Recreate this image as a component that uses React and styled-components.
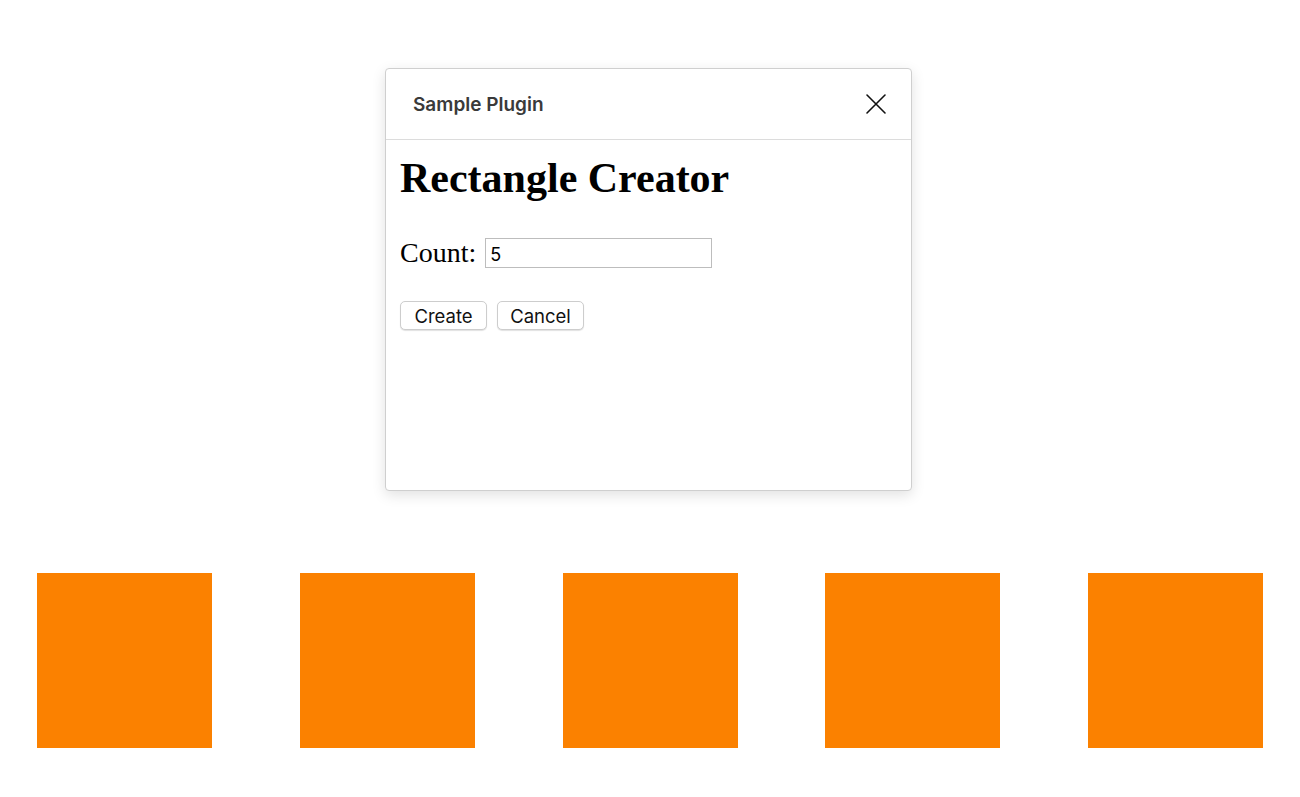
import styled, { createGlobalStyle } from 'styled-components';

const GlobalStyle = createGlobalStyle`
  html, body {
    margin: 0;
    padding: 0;
    background: #ffffff;
  }
  body {
    font-family: "Liberation Serif", "Times New Roman", serif;
  }
`;

const Page = styled.div`
  width: 1300px;
  height: 797px;
  display: flex;
  flex-direction: column;
  align-items: center;
  padding-top: 68px;
  box-sizing: border-box;
`;

const Dialog = styled.div`
  width: 527px;
  height: 423px;
  margin-left: -3px;
  box-sizing: border-box;
  background: #fff;
  border: 1px solid #cfcfcf;
  border-radius: 4px;
  box-shadow: 0 4px 14px rgba(0, 0, 0, 0.12);
  display: flex;
  flex-direction: column;
`;

const Header = styled.div`
  height: 71px;
  box-sizing: border-box;
  border-bottom: 1px solid #dcdcdc;
  display: flex;
  align-items: center;
  justify-content: space-between;
  padding: 0 23px 0 27px;
`;

const Title = styled.div`
  font-family: Inter, "Noto Sans", sans-serif;
  font-weight: 600;
  font-size: 19px;
  color: #3a3a3a;
`;

const CloseButton = styled.button`
  border: none;
  background: none;
  padding: 0;
  width: 24px;
  height: 24px;
  display: flex;
  align-items: center;
  justify-content: center;
  cursor: pointer;
  color: #111;
`;

const Body = styled.div`
  padding: 14px 14px;
`;

const Heading = styled.h1`
  margin: 0;
  font-family: "Liberation Serif", "Times New Roman", serif;
  font-weight: 700;
  font-size: 42px;
  line-height: 48px;
  color: #000;
`;

const Field = styled.div`
  margin-top: 35px;
  display: flex;
  align-items: center;
  gap: 9px;
`;

const Label = styled.label`
  font-size: 28px;
  color: #000;
`;

const Input = styled.input`
  width: 227px;
  height: 30px;
  box-sizing: border-box;
  border: 1px solid #bdbdbd;
  padding: 2px 4px 0;
  font-family: Inter, "Noto Sans", sans-serif;
  font-size: 18px;
  color: #000;
  outline: none;
`;

const Actions = styled.div`
  margin-top: 32px;
  display: flex;
  gap: 10px;
`;

const Button = styled.button`
  height: 29px;
  padding: 0 12px;
  min-width: 87px;
  box-sizing: border-box;
  background: #fff;
  border: 1px solid #cdcdcd;
  border-radius: 5px;
  box-shadow: 0 1px 1px rgba(0, 0, 0, 0.12);
  font-family: Inter, "Noto Sans", sans-serif;
  font-size: 18.5px;
  color: #111;
  cursor: pointer;
`;

const Squares = styled.div`
  margin-top: 82px;
  width: 100%;
  box-sizing: border-box;
  padding: 0 37px;
  display: flex;
  justify-content: space-between;
`;

const Square = styled.div`
  width: 175px;
  height: 175px;
  background: #fb8100;
`;

const App = () => {
  const count = 5;
  return (
    <>
      <GlobalStyle />
      <Page>
        <Dialog>
          <Header>
            <Title>Sample Plugin</Title>
            <CloseButton aria-label="Close">
              <svg width="22" height="22" viewBox="0 0 22 22" fill="none">
                <path d="M2 2L20 20M20 2L2 20" stroke="currentColor" strokeWidth="1.6" strokeLinecap="round" />
              </svg>
            </CloseButton>
          </Header>
          <Body>
            <Heading>Rectangle Creator</Heading>
            <Field>
              <Label htmlFor="count">Count:</Label>
              <Input id="count" defaultValue={count} />
            </Field>
            <Actions>
              <Button>Create</Button>
              <Button>Cancel</Button>
            </Actions>
          </Body>
        </Dialog>
        <Squares>
          {Array.from({ length: count }).map((_, i) => (
            <Square key={i} />
          ))}
        </Squares>
      </Page>
    </>
  );
};

export default App;
